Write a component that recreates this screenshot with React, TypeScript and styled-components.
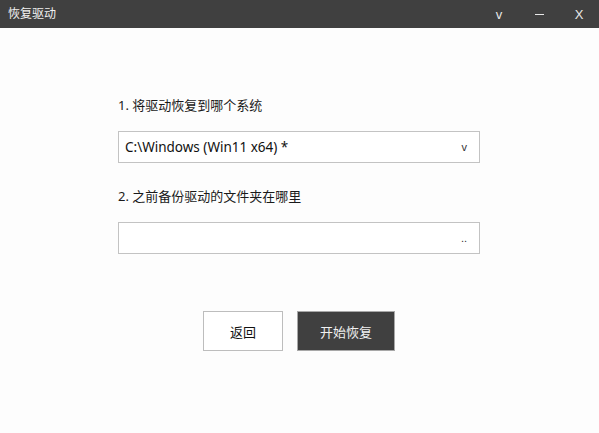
import styled, { createGlobalStyle } from "styled-components";

const GlobalStyle = createGlobalStyle`
    html, body {
        margin: 0;
        padding: 0;
        background: #fdfdfd;
    }
    body {
        font-family: "Noto Sans", "Noto Sans CJK SC", sans-serif;
    }
`;

const Window = styled.div`
    width: 599px;
    height: 433px;
    display: flex;
    flex-direction: column;
    background: #fdfdfd;
    overflow: hidden;
`;

const TitleBar = styled.div`
    height: 28px;
    background: #404040;
    display: flex;
    align-items: center;
    color: #f0f0f0;
    flex-shrink: 0;
`;

const Title = styled.div`
    flex: 1;
    padding-left: 8px;
    font-size: 12px;
    line-height: 28px;
`;

const TitleButton = styled.div`
    width: 40px;
    height: 28px;
    display: flex;
    align-items: center;
    justify-content: center;
    font-family: "Liberation Sans", sans-serif;
    font-size: 13px;
    color: #e8e8e8;
`;

const Dash = styled.span`
    width: 9px;
    height: 1px;
    background: #e8e8e8;
`;

const Body = styled.div`
    flex: 1;
    display: flex;
    flex-direction: column;
    align-items: center;
    padding-top: 67px;
`;

const Form = styled.div`
    width: 362px;
    margin-right: 1px;
    display: flex;
    flex-direction: column;
`;

const Label = styled.div<{ $gap: number }>`
    font-size: 13px;
    line-height: 20px;
    color: #1a1a1a;
    margin-top: ${(p) => p.$gap}px;
    margin-bottom: 16px;
`;

const Field = styled.div`
    height: 32px;
    box-sizing: border-box;
    border: 1px solid #c3c3c3;
    background: #ffffff;
    display: flex;
    align-items: center;
    padding: 0 12px 0 6px;
    font-size: 13.5px;
    color: #111;
`;

const FieldText = styled.span`
    flex: 1;
`;

const FieldIcon = styled.span`
    font-family: "Liberation Sans", sans-serif;
    font-size: 11px;
    color: #333;
`;

const Actions = styled.div`
    display: flex;
    gap: 14px;
    margin-top: 57px;
    margin-right: 1px;
`;

const Button = styled.button<{ $primary?: boolean }>`
    height: 40px;
    width: ${(p) => (p.$primary ? 98 : 80)}px;
    box-sizing: border-box;
    border: 1px solid ${(p) => (p.$primary ? "#a8a8a8" : "#bdbdbd")};
    background: ${(p) => (p.$primary ? "#404040" : "#ffffff")};
    color: ${(p) => (p.$primary ? "#f0f0f0" : "#111")};
    font-family: "Noto Sans", "Noto Sans CJK SC", sans-serif;
    font-size: 13px;
    padding: 0;
    cursor: pointer;
`;

const App = () => {
    return (
        <>
            <GlobalStyle />
            <Window>
                <TitleBar>
                    <Title>恢复驱动</Title>
                    <TitleButton>v</TitleButton>
                    <TitleButton><Dash /></TitleButton>
                    <TitleButton>X</TitleButton>
                </TitleBar>
                <Body>
                    <Form>
                        <Label $gap={0}>1. 将驱动恢复到哪个系统</Label>
                        <Field>
                            <FieldText>C:\Windows (Win11 x64) *</FieldText>
                            <FieldIcon>v</FieldIcon>
                        </Field>
                        <Label $gap={23}>2. 之前备份驱动的文件夹在哪里</Label>
                        <Field>
                            <FieldText></FieldText>
                            <FieldIcon>..</FieldIcon>
                        </Field>
                    </Form>
                    <Actions>
                        <Button>返回</Button>
                        <Button $primary>开始恢复</Button>
                    </Actions>
                </Body>
            </Window>
        </>
    );
};

export default App;
